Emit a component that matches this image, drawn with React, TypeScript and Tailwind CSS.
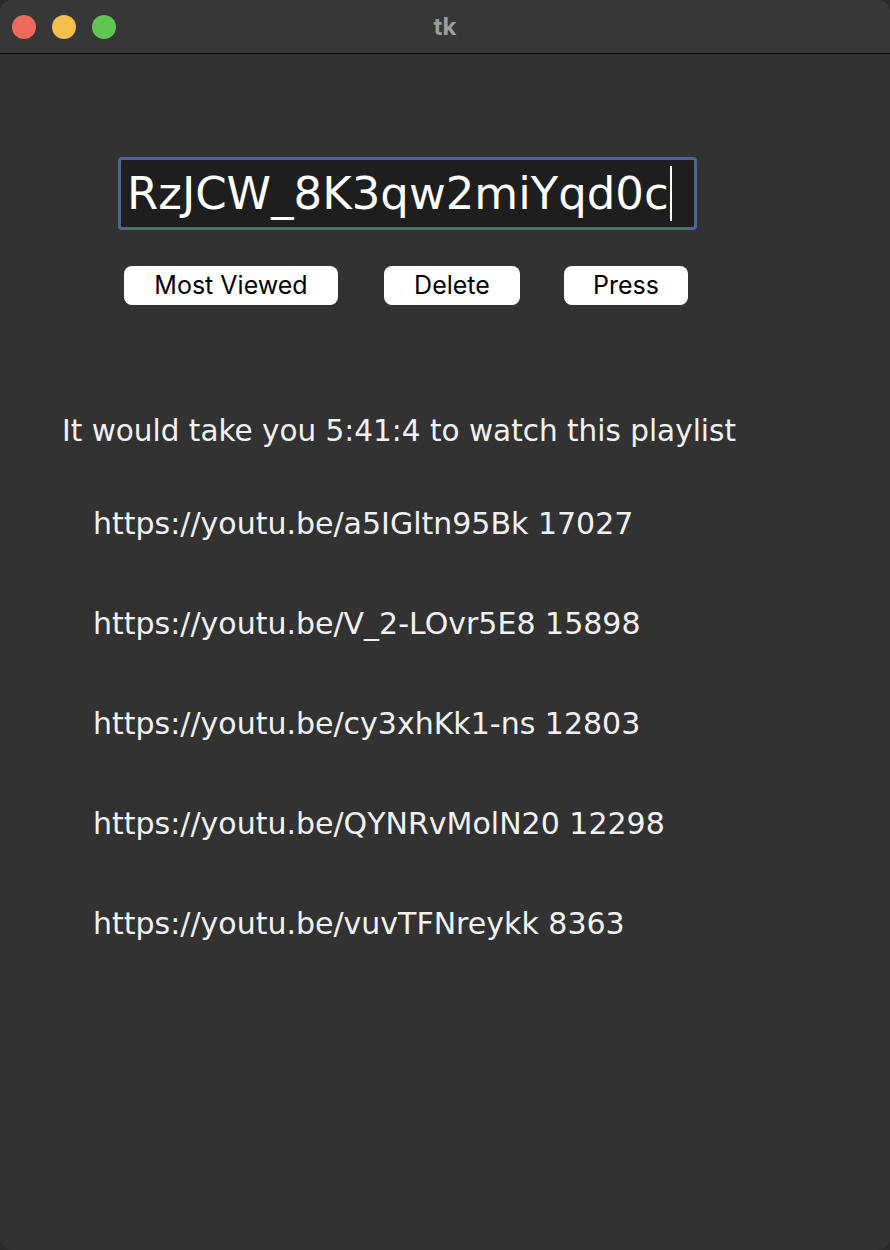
import React from 'react';

const links = [
  { url: 'https://youtu.be/a5IGltn95Bk', views: 17027 },
  { url: 'https://youtu.be/V_2-LOvr5E8', views: 15898 },
  { url: 'https://youtu.be/cy3xhKk1-ns', views: 12803 },
  { url: 'https://youtu.be/QYNRvMolN20', views: 12298 },
  { url: 'https://youtu.be/vuvTFNreykk', views: 8363 },
];

export default function App() {
  return (
    <div className="w-[890px] h-[1250px] bg-[#2a2a2a]">
      <div className="w-full h-full bg-[#323232] rounded-[12px] overflow-hidden flex flex-col">
        {/* Title bar */}
        <div className="h-[54px] shrink-0 bg-[#373737] border-b border-black grid grid-cols-3 items-center">
          <div className="flex items-center gap-4 pl-3">
            <span className="w-6 h-6 rounded-full bg-[#ee6a5f]" />
            <span className="w-6 h-6 rounded-full bg-[#f5bf4f]" />
            <span className="w-6 h-6 rounded-full bg-[#61c554]" />
          </div>
          <div className="text-center text-[24px] font-bold text-[#9d9d9d] font-['Inter',sans-serif]">tk</div>
          <div />
        </div>

        {/* Body */}
        <div className="flex flex-col pt-[103px]">
          <div className="ml-[118px] w-[579px] h-[73px] border-[3px] border-[#4a6896] rounded-[4px] bg-[#1e1e1e] flex items-center pl-[6px]">
            <span className="text-[45px] leading-none text-white font-['DejaVu_Sans',sans-serif]">RzJCW_8K3qw2miYqd0c</span>
            <span className="w-[2px] h-[55px] bg-white ml-[1px]" />
          </div>

          <div className="flex mt-[36px] ml-[124px] font-['Inter',sans-serif] text-[25px] text-black">
            <button className="w-[214px] h-[39px] bg-white rounded-[8px] flex items-center justify-center">Most Viewed</button>
            <button className="w-[136px] h-[39px] bg-white rounded-[8px] flex items-center justify-center ml-[46px]">Delete</button>
            <button className="w-[124px] h-[39px] bg-white rounded-[8px] flex items-center justify-center ml-[44px]">Press</button>
          </div>

          <div className="mt-[108px] font-['DejaVu_Sans',sans-serif] text-[30px] leading-[36px] text-[#f2f2f2]">
            <p className="ml-[62px] text-[29.5px]">It would take you 5:41:4 to watch this playlist</p>
            <div className="flex flex-col gap-[64px] mt-[57px] ml-[93px]">
              {links.map((l) => (
                <p key={l.url}>
                  {l.url} {l.views}
                </p>
              ))}
            </div>
          </div>
        </div>
      </div>
    </div>
  );
}
